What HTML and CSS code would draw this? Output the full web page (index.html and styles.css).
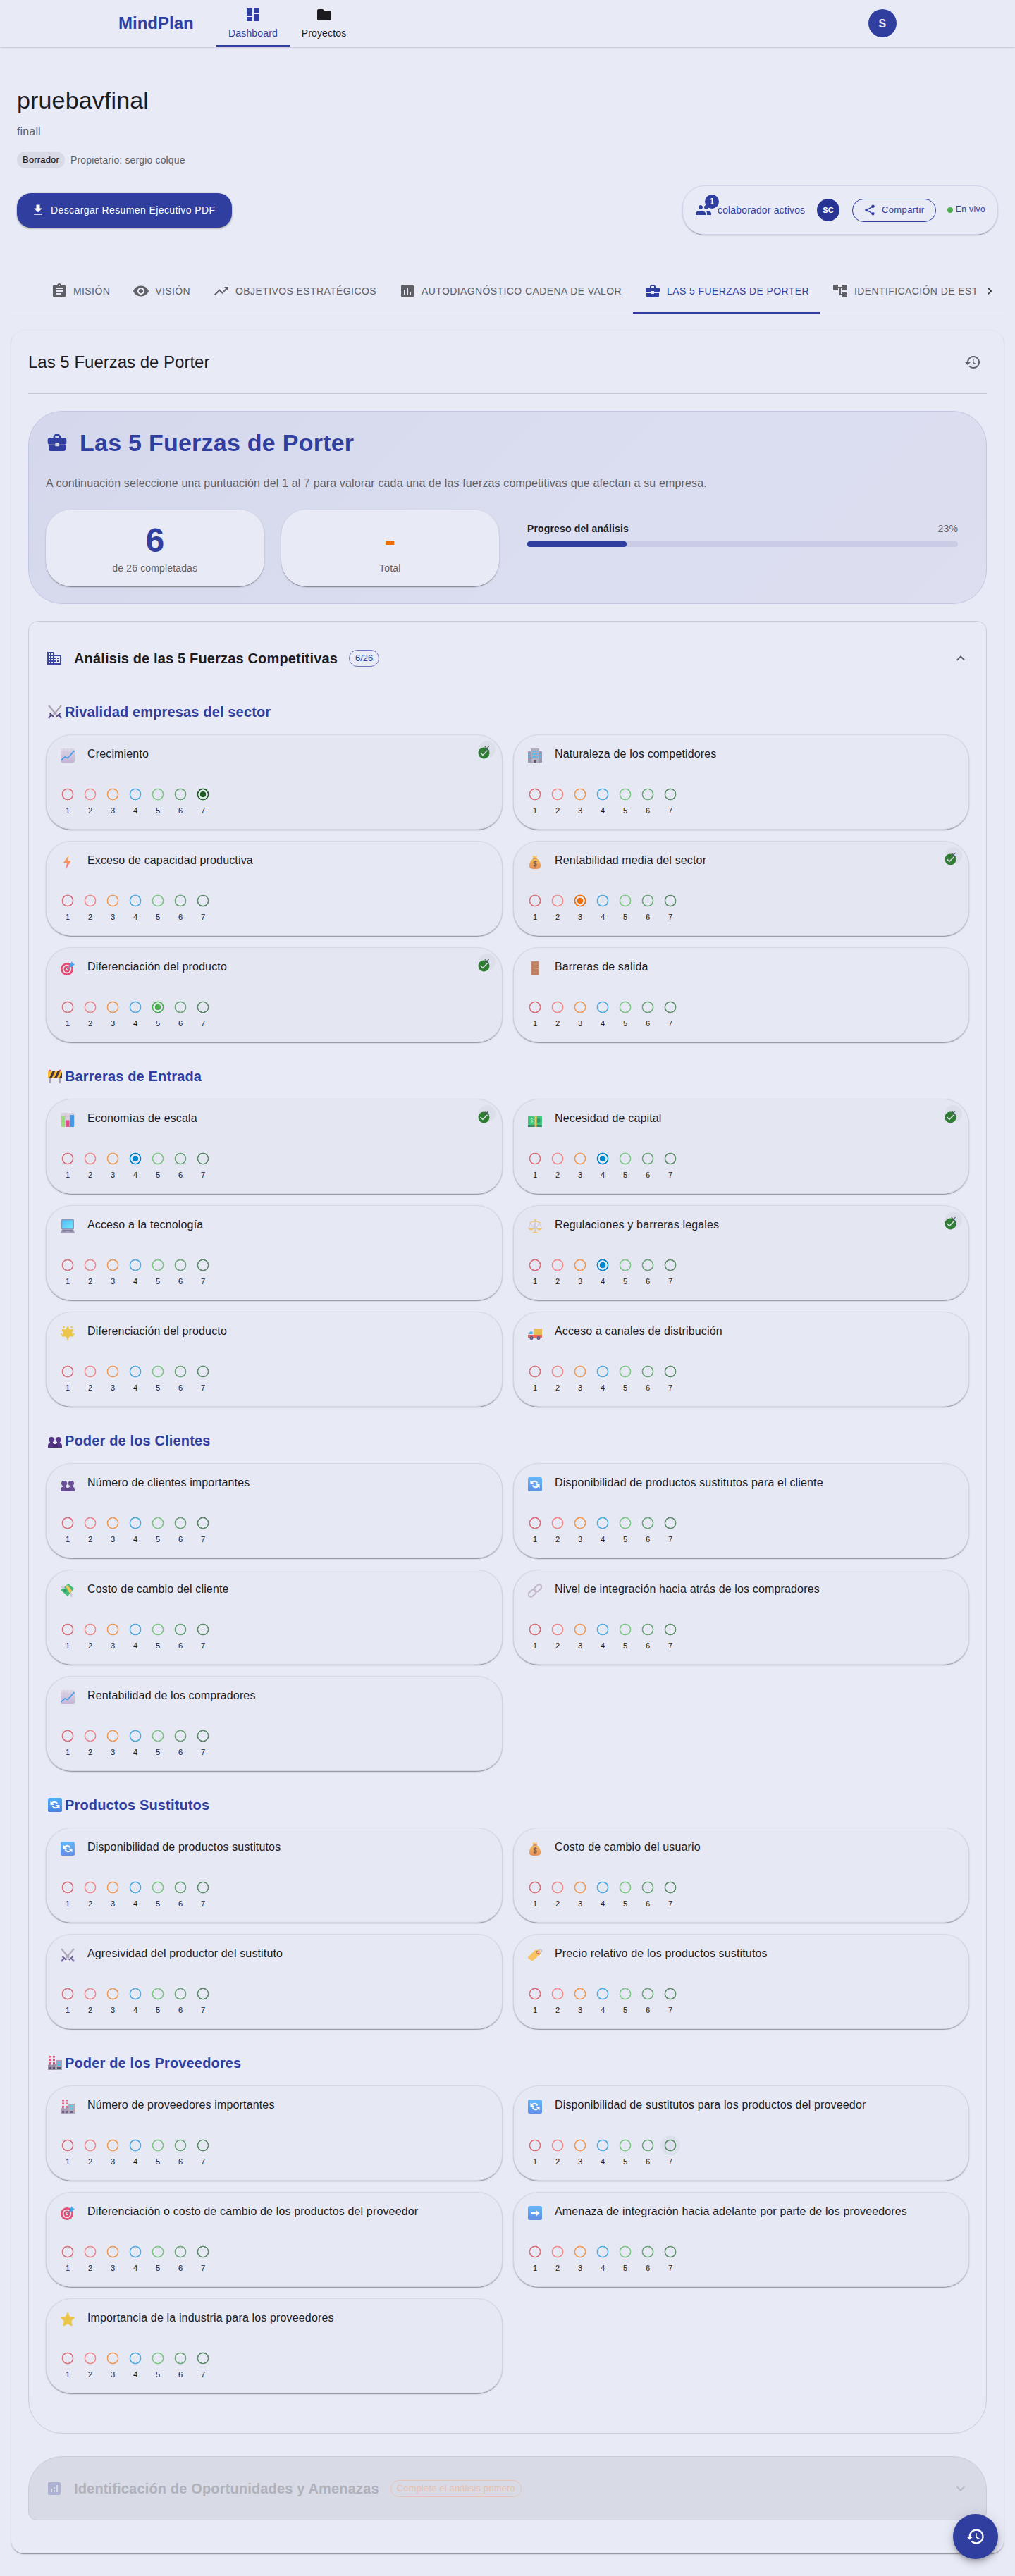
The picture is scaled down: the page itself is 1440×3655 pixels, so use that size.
FILE: index.html
```html
<!DOCTYPE html>
<html lang="es">
<head>
<meta charset="utf-8">
<title>MindPlan - Las 5 Fuerzas de Porter</title>
<link rel="stylesheet" href="styles.css">
</head>
<body>
<svg class="defs" aria-hidden="true">
  <defs>
    <linearGradient id="g-blue" x1="0" y1="0" x2="0" y2="1"><stop offset="0" stop-color="#4fb0fb"/><stop offset="1" stop-color="#4c7fe4"/></linearGradient>
    <linearGradient id="g-bag" x1="0" y1="0" x2="0" y2="1"><stop offset="0" stop-color="#fbc64a"/><stop offset="1" stop-color="#e5803c"/></linearGradient>
    <linearGradient id="g-bolt" x1="0" y1="0" x2="0" y2="1"><stop offset="0" stop-color="#ffb62e"/><stop offset="1" stop-color="#f4506a"/></linearGradient>
    <linearGradient id="g-paper" x1="0" y1="0" x2="0" y2="1"><stop offset="0" stop-color="#e0d9e6"/><stop offset="1" stop-color="#c0a9d2"/></linearGradient>
    <linearGradient id="g-screen" x1="0" y1="0" x2="1" y2="1"><stop offset="0" stop-color="#37b4f5"/><stop offset="1" stop-color="#5fe8fb"/></linearGradient>
  </defs>
  <symbol id="i-dashboard" viewBox="0 0 24 24"><path d="M3 13h8V3H3v10zm0 8h8v-6H3v6zm10 0h8V11h-8v10zm0-18v6h8V3h-8z"/></symbol>
  <symbol id="i-folder" viewBox="0 0 24 24"><path d="M10 4H4c-1.100 0-1.990.9-1.990 2L2 18c0 1.100.9 2 2 2h16c1.100 0 2-.9 2-2V8c0-1.100-.9-2-2-2h-8l-2-2z"/></symbol>
  <symbol id="i-download" viewBox="0 0 24 24"><path d="M5 20h14v-2H5v2zM19 9h-4V3H9v6H5l7 7 7-7z"/></symbol>
  <symbol id="i-group" viewBox="0 0 24 24"><path d="M16 11c1.660 0 2.990-1.340 2.990-3S17.660 5 16 5c-1.660 0-3 1.340-3 3s1.340 3 3 3zm-8 0c1.660 0 2.990-1.340 2.990-3S9.660 5 8 5C6.340 5 5 6.340 5 8s1.340 3 3 3zm0 2c-2.330 0-7 1.170-7 3.500V19h14v-2.500c0-2.330-4.670-3.500-7-3.500zm8 0c-.29 0-.62.02-.97.05 1.160.84 1.970 1.970 1.970 3.450V19h6v-2.500c0-2.330-4.670-3.500-7-3.500z"/></symbol>
  <symbol id="i-share" viewBox="0 0 24 24"><path d="M18 16.080c-.76 0-1.440.3-1.960.77L8.910 12.700c.05-.23.09-.46.09-.7s-.04-.47-.09-.7l7.050-4.110c.54.5 1.250.81 2.040.81 1.660 0 3-1.340 3-3s-1.340-3-3-3-3 1.340-3 3c0 .24.04.47.09.7L8.040 9.810C7.500 9.310 6.790 9 6 9c-1.660 0-3 1.340-3 3s1.340 3 3 3c.79 0 1.500-.31 2.040-.81l7.120 4.160c-.05.21-.08.43-.08.65 0 1.610 1.310 2.920 2.920 2.920s2.920-1.310 2.920-2.920-1.310-2.920-2.920-2.920z"/></symbol>
  <symbol id="i-assignment" viewBox="0 0 24 24"><path d="M19 3h-4.180C14.400 1.840 13.300 1 12 1c-1.300 0-2.400.84-2.820 2H5c-1.100 0-2 .9-2 2v14c0 1.100.9 2 2 2h14c1.100 0 2-.9 2-2V5c0-1.100-.9-2-2-2zm-7 0c.55 0 1 .45 1 1s-.45 1-1 1-1-.45-1-1 .45-1 1-1zm2 14H7v-2h7v2zm3-4H7v-2h10v2zm0-4H7V7h10v2z"/></symbol>
  <symbol id="i-eye" viewBox="0 0 24 24"><path d="M12 4.500C7 4.500 2.730 7.610 1 12c1.730 4.390 6 7.500 11 7.500s9.270-3.110 11-7.500c-1.730-4.390-6-7.500-11-7.500zM12 17c-2.760 0-5-2.240-5-5s2.240-5 5-5 5 2.240 5 5-2.240 5-5 5zm0-8c-1.660 0-3 1.340-3 3s1.340 3 3 3 3-1.340 3-3-1.340-3-3-3z"/></symbol>
  <symbol id="i-trend" viewBox="0 0 24 24"><path d="m16 6 2.290 2.290-4.880 4.880-4-4L2 16.590 3.410 18l6-6 4 4 6.300-6.290L22 12V6z"/></symbol>
  <symbol id="i-chart" viewBox="0 0 24 24"><path d="M19 3H5c-1.100 0-2 .9-2 2v14c0 1.100.9 2 2 2h14c1.100 0 2-.9 2-2V5c0-1.100-.9-2-2-2zM9 17H7v-7h2v7zm4 0h-2V7h2v10zm4 0h-2v-4h2v4z"/></symbol>
  <symbol id="i-analytics" viewBox="0 0 24 24"><path d="M19 3H5c-1.100 0-2 .9-2 2v14c0 1.100.9 2 2 2h14c1.100 0 2-.9 2-2V5c0-1.100-.9-2-2-2zM9 17H7v-5h2v5zm4 0h-2v-3h2v3zm0-5h-2v-2h2v2zm4 5h-2V7h2v10z"/></symbol>
  <symbol id="i-case" viewBox="0 0 24 24"><path d="M10 16v-1H3.010L3 19c0 1.110.89 2 2 2h14c1.110 0 2-.89 2-2v-4h-7v1h-4zm10-9h-4.010V5l-2-2h-4l-2 2v2H4c-1.100 0-2 .9-2 2v3c0 1.110.89 2 2 2h6v-2h4v2h6c1.100 0 2-.9 2-2V9c0-1.100-.9-2-2-2zm-6 0h-4V5h4v2z"/></symbol>
  <symbol id="i-tree" viewBox="0 0 24 24"><path d="M22 11V3h-7v3H9V3H2v8h7V8h2v10h4v3h7v-8h-7v3h-2V8h2v3z"/></symbol>
  <symbol id="i-right" viewBox="0 0 24 24"><path d="M10 6 8.590 7.410 13.170 12l-4.580 4.590L10 18l6-6z"/></symbol>
  <symbol id="i-up" viewBox="0 0 24 24"><path d="m12 8-6 6 1.410 1.410L12 10.830l4.590 4.580L18 14z"/></symbol>
  <symbol id="i-history" viewBox="0 0 24 24"><path d="M13 3c-4.970 0-9 4.030-9 9H1l3.890 3.890.07.14L9 12H6c0-3.870 3.130-7 7-7s7 3.130 7 7-3.130 7-7 7c-1.930 0-3.680-.79-4.940-2.060l-1.420 1.420C8.270 19.990 10.510 21 13 21c4.970 0 9-4.030 9-9s-4.030-9-9-9zm-1 5v5l4.280 2.540.72-1.210-3.500-2.080V8H12z"/></symbol>
  <symbol id="i-business" viewBox="0 0 24 24"><path d="M12 7V3H2v18h20V7H12zM6 19H4v-2h2v2zm0-4H4v-2h2v2zm0-4H4V9h2v2zm0-4H4V5h2v2zm4 12H8v-2h2v2zm0-4H8v-2h2v2zm0-4H8V9h2v2zm0-4H8V5h2v2zm10 12h-8v-2h2v-2h-2v-2h2v-2h-2V9h8v10zm-2-8h-2v2h2v-2zm0 4h-2v2h2v-2z"/></symbol>
  <symbol id="i-check" viewBox="0 0 24 24"><path d="M12 2C6.480 2 2 6.480 2 12s4.480 10 10 10 10-4.480 10-10S17.520 2 12 2zm-2 15-5-5 1.410-1.410L10 14.170l7.590-7.590L19 8l-9 9z"/></symbol>

  <symbol id="e-swords" viewBox="0 0 20 20"><path d="M1 1l11 13M19 1L8 14" stroke="#a9a2b3" stroke-width="2.200" fill="none"/><path d="M2.500 12l5.500 5M17.500 12l-5.500 5M5 14.500L1.500 18M15 14.500l3.500 3.500" stroke="#5b4a80" stroke-width="2.200" fill="none"/><path d="M2.500 19.500l-2-2M17.500 19.500l2-2" stroke="#8f7bd0" stroke-width="1.800"/></symbol>
  <symbol id="e-growth" viewBox="0 0 20 20"><rect width="20" height="20" rx="2" fill="url(#g-paper)"/><path d="M5 0v20M10 0v20M15 0v20M0 5h20M0 10h20M0 15h20" stroke="#c3b8d0" stroke-width=".6"/><path d="M.5 17L6 12l4 1.500L19.500 3" stroke="#2390ea" stroke-width="1.600" fill="none"/></symbol>
  <symbol id="e-bolt" viewBox="0 0 20 20"><path d="M11.500 0L4 11h5L7.500 20 15 8h-5z" fill="url(#g-bolt)"/></symbol>
  <symbol id="e-target" viewBox="0 0 20 20"><circle cx="9" cy="11" r="9" fill="#e4315e"/><circle cx="9" cy="11" r="6.300" fill="#ecdbe8"/><circle cx="9" cy="11" r="4.500" fill="#e4315e"/><circle cx="9" cy="11" r="2.200" fill="#ecdbe8"/><path d="M9 11l7-7" stroke="#6a6f9a" stroke-width="1.200"/><path d="M13 5l3-5 1 3 3 1-4 4-3 0z" fill="#2898ee"/></symbol>
  <symbol id="e-building" viewBox="0 0 20 20"><path d="M0 5q0-1 1-1h4v16H0zM15 4h4q1 0 1 1v15h-5z" fill="#8f8aa9"/><path d="M4 1q0-1 1-1h10q1 0 1 1v19H4z" fill="#aaa4b8"/><path d="M6 3h2v2H6zm3 0h2v2H9zm3 0h2v2h-2zM6 7h2v2H6zm3 0h2v2H9zm3 0h2v2h-2zM6 11h2v2H6zm3 0h2v2H9zm3 0h2v2h-2zM1 7h2v2H1zm0 4h2v2H1zm16-4h2v2h-2zm0 4h2v2h-2z" fill="#38b6f6"/><path d="M8 16h4v4H8z" fill="#49365a"/></symbol>
  <symbol id="e-bag" viewBox="0 0 20 20"><path d="M6.500 1l3.500 1 3-2-1 5c4 2 6 6 6 10 0 4-2 5-8 5s-8-1-8-5c0-4 2-8 6-10z" fill="url(#g-bag)"/><path d="M7 5h6" stroke="#a05a30" stroke-width="1"/><path d="M12.300 10c-1-1.300-4.300-1-4.300.8 0 2 4.300 1 4.300 3.200 0 1.800-3.500 2-4.500.6M10 8v9.500" stroke="#704432" stroke-width="1.200" fill="none"/></symbol>
  <symbol id="e-door" viewBox="0 0 20 20"><path d="M4.500 0h11v20h-11z" fill="#c37a52"/><path d="M6.500 2h7v4h-7zm0 6h7v4h-7zm0 6h7v4h-7z" fill="none" stroke="#a65d3c" stroke-width=".8"/><circle cx="14" cy="10.500" r=".8" fill="#f0c25e"/></symbol>
  <symbol id="e-barrier" viewBox="0 0 20 20"><path d="M2 1h2v19H2zM16 1h2v19h-2z" fill="#aaa1b2"/><rect y="3" width="20" height="9.500" rx="1" fill="#f9b92e"/><path d="M2 12.500L6.500 3H10L5.500 12.500zM9 12.500L13.500 3H17l-4.500 9.500zM16 12.500L20 4.500v8z" fill="#443345"/><circle cx="3" cy="2" r="1.300" fill="#e84865"/><circle cx="17" cy="2" r="1.300" fill="#e84865"/></symbol>
  <symbol id="e-bars" viewBox="0 0 20 20"><rect width="20" height="20" rx="2" fill="#d8cfdf"/><path d="M7 0v20M13 0v20M0 6h20M0 13h20" stroke="#c0b3cc" stroke-width=".6"/><path d="M1 5h5v15H1z" fill="#8cdc62"/><path d="M7.500 10.500h5V20h-5z" fill="#e83172"/><path d="M14 3h5v17h-5z" fill="#2e8be2"/></symbol>
  <symbol id="e-cash" viewBox="0 0 20 20"><rect y="5" width="20" height="12" rx="1" fill="#27c06a"/><path d="M0 17h20v3H0z" fill="#177a50"/><circle cx="14.500" cy="11" r="3" fill="#159056"/><path d="M7 9c-1-1-3-.5-2.500 1 .4 1 2.500.7 2.500 2 0 1.300-2 1.500-3 .5" stroke="#c4f3cc" stroke-width="1" fill="none"/><path d="M9.500 5h3v15h-3z" fill="#f4b93c"/></symbol>
  <symbol id="e-laptop" viewBox="0 0 20 20"><rect x="1" width="18" height="14" rx="1" fill="#7b8ab8"/><path d="M2.300 1.300h15.400v11.400H2.300z" fill="url(#g-screen)"/><path d="M2 14h16l2 5H0z" fill="#9a94b2"/><path d="M3 15.500h14M2.500 17.200h5M12.500 17.200h5" stroke="#68607f" stroke-width=".8"/><path d="M0 18.800h20V20H0z" fill="#b5adc4"/></symbol>
  <symbol id="e-scale" viewBox="0 0 20 20"><path d="M9.300 1h1.400v17H9.300z" fill="#cfb9d4"/><path d="M2 5q8-4 16 0" stroke="#f5bf68" stroke-width="1.200" fill="none"/><path d="M4 5L1 13h7L4 5M16 5l-4 8h7.500L16 5" stroke="#cbb8cf" stroke-width=".8" fill="none"/><path d="M0 13h8.500q-4 5-8.500 0zM11.500 13H20q-4 5-8.500 0zM5.500 19.500q4.500-4 9 0z" fill="#f8bd55"/><circle cx="10" cy="1.500" r="1.300" fill="#f8bd55"/></symbol>
  <symbol id="e-glow" viewBox="0 0 20 20"><path d="M10 1.500l2.400 4.700 5.400-.6-2.600 4.600 2.600 4.600-5.200-.4L10 18l-2.600-3.600-5.200.4 2.600-4.600-2.600-4.600 5.400.6z" fill="#ecc02d" stroke="#ecc02d" stroke-width="1.500" stroke-linejoin="round"/><g fill="#f0b93c"><circle cx="4.500" cy="2" r="1.200"/><circle cx="15.500" cy="2" r="1.200"/><circle cx="1.200" cy="12.300" r="1.100"/><circle cx="18.800" cy="12.300" r="1.100"/><circle cx="10" cy="19" r="1.200"/></g></symbol>
  <symbol id="e-truck" viewBox="0 0 20 20"><path d="M8.500 4H19q1 0 1 1v9H8.500z" fill="#e8b536"/><path d="M2 7h6v8H0v-4z" fill="#dfd7e2"/><path d="M3 8.500h3.500V12H1.500z" fill="#2db4ee"/><path d="M0 13h20v4H0z" fill="#ee5141"/><circle cx="5" cy="17.500" r="2.500" fill="#4a3d63"/><circle cx="15" cy="17.500" r="2.500" fill="#4a3d63"/><circle cx="5" cy="17.500" r="1" fill="#b9b0c8"/><circle cx="15" cy="17.500" r="1" fill="#b9b0c8"/></symbol>
  <symbol id="e-people" viewBox="0 0 20 20"><path d="M0 20v-3q0-3 3-3.500V12Q1 11 1 8.500 1 5 5 5t4.300 3.500Q9.300 11 7 12v1.500q2.500.5 2.600 3.500v3zM10.400 20v-3q.1-3 2.600-3.500V12q-2.300-1-2.300-3.500Q11 5 15 5t4 3.500Q19 11 17 12v1.500q3 .5 3 3.500v3z" fill="#553684"/><path d="M6 15h8v5H6z" fill="#4a2d78"/></symbol>
  <symbol id="e-sync" viewBox="0 0 20 20"><rect width="20" height="20" rx="2.500" fill="url(#g-blue)"/><path d="M5 10V6.500M5 7.500q5.500-4 8.500 1M15 10v3.500M15 12.500q-5.500 4-8.500-1" stroke="#fff" stroke-width="2" fill="none"/><path d="M3.500 4.500v5.500H9zM16.500 15.500V10H11z" fill="#fff"/></symbol>
  <symbol id="e-wing" viewBox="0 0 20 20"><path d="M0 9L11 0l8 7-9 11z" fill="#27b765"/><path d="M7 4l3-2 6 8-3 4z" fill="#f3bd3e"/><path d="M0 4q5 0 7 3-5 1-7-3zM14 13q4 0 2 7-3-2-2-7z" fill="#c8c0d1"/><circle cx="6" cy="10" r="2" fill="#14854f"/></symbol>
  <symbol id="e-link" viewBox="0 0 20 20"><g fill="none" stroke="#bdb1c6" stroke-width="2.200"><rect x="0" y="10" width="12" height="7" rx="3.500" transform="rotate(-42 6 13.500)"/><rect x="8" y="3" width="12" height="7" rx="3.500" transform="rotate(-42 14 6.500)"/></g></symbol>
  <symbol id="e-tag" viewBox="0 0 20 20"><path d="M0 13L10 3l7-.5 1 6L7 18q-1 .8-2 0L0 14.500z" fill="#fbbd4a"/><circle cx="14" cy="6" r="2.200" fill="#e4573d"/><circle cx="14" cy="6" r="1" fill="#efe6ea"/><path d="M14 6q1-6 5-4 2 4-3 6" stroke="#b8b0c0" stroke-width="1" fill="none"/></symbol>
  <symbol id="e-factory" viewBox="0 0 20 20"><path d="M2 0h3v12H2zM7 0h3v12H7z" fill="#e2507b"/><path d="M2 2.500h3v2H2zm5 0h3v2H7zM2 7h3v2H2zm5 0h3v2H7z" fill="#e8dfe8"/><path d="M0 13l5-2.500V13l6-2.500V20H0z" fill="#9b8fa8"/><path d="M11 6h9v14h-9z" fill="#a9a1b7"/><path d="M13 8h2v2h-2zm3 0h2v2h-2zm-3 4h2v2h-2zm3 0h2v2h-2z" fill="#3fc2f4"/><path d="M2 16h3v3H2zm5 0h3v3H7zm6 0h5v3h-5z" fill="#5d4b70"/></symbol>
  <symbol id="e-arrow" viewBox="0 0 20 20"><rect width="20" height="20" rx="2.500" fill="url(#g-blue)"/><path d="M4 9h7V5.500l5.500 4.700L11 15v-3.500H4z" fill="#fff"/></symbol>
  <symbol id="e-star" viewBox="0 0 20 20"><path d="M10 1.200l2.700 5.700 6.300.8-4.600 4.300 1.300 6.500L10 15.500l-5.700 3 1.300-6.500L1 7.700l6.300-.8z" fill="#ecc02d" stroke="#ecc02d" stroke-width="1.600" stroke-linejoin="round"/></symbol>
</svg>

<header class="topbar">
  <div class="brand">MindPlan</div>
  <nav class="nav">
    <a class="nav-item active"><svg><use href="#i-dashboard"/></svg><span>Dashboard</span></a>
    <a class="nav-item"><svg><use href="#i-folder"/></svg><span>Proyectos</span></a>
  </nav>
  <div class="avatar">S</div>
</header>

<section class="project">
  <h1>pruebavfinal</h1>
  <p class="desc">finall</p>
  <div class="meta"><span class="state">Borrador</span><span>Propietario: sergio colque</span></div>
  <div class="actions">
    <button class="download"><svg><use href="#i-download"/></svg>Descargar Resumen Ejecutivo PDF</button>
    <div class="collab">
      <span class="people"><svg><use href="#i-group"/></svg><b class="badge">1</b></span>
      <span class="collab-text">colaborador activos</span>
      <span class="mini-avatar">SC</span>
      <button class="share"><svg><use href="#i-share"/></svg>Compartir</button>
      <span class="live"><i></i>En vivo</span>
    </div>
  </div>
</section>

<nav class="tabs">
  <div class="tab-strip">
    <a class="tab"><svg><use href="#i-assignment"/></svg>MISIÓN</a>
    <a class="tab"><svg><use href="#i-eye"/></svg>VISIÓN</a>
    <a class="tab"><svg><use href="#i-trend"/></svg>OBJETIVOS ESTRATÉGICOS</a>
    <a class="tab"><svg><use href="#i-chart"/></svg>AUTODIAGNÓSTICO CADENA DE VALOR</a>
    <a class="tab active"><svg><use href="#i-case"/></svg>LAS 5 FUERZAS DE PORTER</a>
    <a class="tab"><svg><use href="#i-tree"/></svg>IDENTIFICACIÓN DE ESTRATEGIAS</a>
  </div>
  <span class="tab-next"><svg><use href="#i-right"/></svg></span>
</nav>

<main class="panel">
  <div class="panel-head"><h2>Las 5 Fuerzas de Porter</h2><svg><use href="#i-history"/></svg></div>

  <section class="hero">
    <h3><svg><use href="#i-case"/></svg>Las 5 Fuerzas de Porter</h3>
    <p>A continuación seleccione una puntuación del 1 al 7 para valorar cada una de las fuerzas competitivas que afectan a su empresa.</p>
    <div class="stats">
      <div class="stat"><strong>6</strong><span>de 26 completadas</span></div>
      <div class="stat total"><strong>-</strong><span>Total</span></div>
      <div class="progress">
        <div class="progress-label"><b>Progreso del análisis</b><span>23%</span></div>
        <div class="bar"><div style="width:23.080%"></div></div>
      </div>
    </div>
  </section>

  <section class="accordion">
    <div class="acc-head"><svg class="acc-icon"><use href="#i-business"/></svg><h4>Análisis de las 5 Fuerzas Competitivas</h4><span class="count">6/26</span><svg class="chev"><use href="#i-up"/></svg></div>

    <section class="force">
      <h5><svg><use href="#e-swords"/></svg>Rivalidad empresas del sector</h5>
      <div class="cards">
        <article class="card done"><svg class="emo"><use href="#e-growth"/></svg><p>Crecimiento</p><ol><li>1<li>2<li>3<li>4<li>5<li>6<li class="on">7</ol><span class="mark"><svg><use href="#i-check"/></svg><i>✕</i></span></article>
        <article class="card"><svg class="emo"><use href="#e-building"/></svg><p>Naturaleza de los competidores</p><ol><li>1<li>2<li>3<li>4<li>5<li>6<li>7</ol></article>
        <article class="card"><svg class="emo"><use href="#e-bolt"/></svg><p>Exceso de capacidad productiva</p><ol><li>1<li>2<li>3<li>4<li>5<li>6<li>7</ol></article>
        <article class="card done"><svg class="emo"><use href="#e-bag"/></svg><p>Rentabilidad media del sector</p><ol><li>1<li>2<li class="on">3<li>4<li>5<li>6<li>7</ol><span class="mark"><svg><use href="#i-check"/></svg><i>✕</i></span></article>
        <article class="card done"><svg class="emo"><use href="#e-target"/></svg><p>Diferenciación del producto</p><ol><li>1<li>2<li>3<li>4<li class="on">5<li>6<li>7</ol><span class="mark"><svg><use href="#i-check"/></svg><i>✕</i></span></article>
        <article class="card"><svg class="emo"><use href="#e-door"/></svg><p>Barreras de salida</p><ol><li>1<li>2<li>3<li>4<li>5<li>6<li>7</ol></article>
      </div>
    </section>

    <section class="force">
      <h5><svg><use href="#e-barrier"/></svg>Barreras de Entrada</h5>
      <div class="cards">
        <article class="card done"><svg class="emo"><use href="#e-bars"/></svg><p>Economías de escala</p><ol><li>1<li>2<li>3<li class="on">4<li>5<li>6<li>7</ol><span class="mark"><svg><use href="#i-check"/></svg><i>✕</i></span></article>
        <article class="card done"><svg class="emo"><use href="#e-cash"/></svg><p>Necesidad de capital</p><ol><li>1<li>2<li>3<li class="on">4<li>5<li>6<li>7</ol><span class="mark"><svg><use href="#i-check"/></svg><i>✕</i></span></article>
        <article class="card"><svg class="emo"><use href="#e-laptop"/></svg><p>Acceso a la tecnología</p><ol><li>1<li>2<li>3<li>4<li>5<li>6<li>7</ol></article>
        <article class="card done"><svg class="emo"><use href="#e-scale"/></svg><p>Regulaciones y barreras legales</p><ol><li>1<li>2<li>3<li class="on">4<li>5<li>6<li>7</ol><span class="mark"><svg><use href="#i-check"/></svg><i>✕</i></span></article>
        <article class="card"><svg class="emo"><use href="#e-glow"/></svg><p>Diferenciación del producto</p><ol><li>1<li>2<li>3<li>4<li>5<li>6<li>7</ol></article>
        <article class="card"><svg class="emo"><use href="#e-truck"/></svg><p>Acceso a canales de distribución</p><ol><li>1<li>2<li>3<li>4<li>5<li>6<li>7</ol></article>
      </div>
    </section>

    <section class="force">
      <h5><svg><use href="#e-people"/></svg>Poder de los Clientes</h5>
      <div class="cards">
        <article class="card"><svg class="emo"><use href="#e-people"/></svg><p>Número de clientes importantes</p><ol><li>1<li>2<li>3<li>4<li>5<li>6<li>7</ol></article>
        <article class="card"><svg class="emo"><use href="#e-sync"/></svg><p>Disponibilidad de productos sustitutos para el cliente</p><ol><li>1<li>2<li>3<li>4<li>5<li>6<li>7</ol></article>
        <article class="card"><svg class="emo"><use href="#e-wing"/></svg><p>Costo de cambio del cliente</p><ol><li>1<li>2<li>3<li>4<li>5<li>6<li>7</ol></article>
        <article class="card"><svg class="emo"><use href="#e-link"/></svg><p>Nivel de integración hacia atrás de los compradores</p><ol><li>1<li>2<li>3<li>4<li>5<li>6<li>7</ol></article>
        <article class="card"><svg class="emo"><use href="#e-growth"/></svg><p>Rentabilidad de los compradores</p><ol><li>1<li>2<li>3<li>4<li>5<li>6<li>7</ol></article>
      </div>
    </section>

    <section class="force">
      <h5><svg><use href="#e-sync"/></svg>Productos Sustitutos</h5>
      <div class="cards">
        <article class="card"><svg class="emo"><use href="#e-sync"/></svg><p>Disponibilidad de productos sustitutos</p><ol><li>1<li>2<li>3<li>4<li>5<li>6<li>7</ol></article>
        <article class="card"><svg class="emo"><use href="#e-bag"/></svg><p>Costo de cambio del usuario</p><ol><li>1<li>2<li>3<li>4<li>5<li>6<li>7</ol></article>
        <article class="card"><svg class="emo"><use href="#e-swords"/></svg><p>Agresividad del productor del sustituto</p><ol><li>1<li>2<li>3<li>4<li>5<li>6<li>7</ol></article>
        <article class="card"><svg class="emo"><use href="#e-tag"/></svg><p>Precio relativo de los productos sustitutos</p><ol><li>1<li>2<li>3<li>4<li>5<li>6<li>7</ol></article>
      </div>
    </section>

    <section class="force">
      <h5><svg><use href="#e-factory"/></svg>Poder de los Proveedores</h5>
      <div class="cards">
        <article class="card"><svg class="emo"><use href="#e-factory"/></svg><p>Número de proveedores importantes</p><ol><li>1<li>2<li>3<li>4<li>5<li>6<li>7</ol></article>
        <article class="card"><svg class="emo"><use href="#e-sync"/></svg><p>Disponibilidad de sustitutos para los productos del proveedor</p><ol><li>1<li>2<li>3<li>4<li>5<li>6<li class="hover">7</ol></article>
        <article class="card"><svg class="emo"><use href="#e-target"/></svg><p>Diferenciación o costo de cambio de los productos del proveedor</p><ol><li>1<li>2<li>3<li>4<li>5<li>6<li>7</ol></article>
        <article class="card"><svg class="emo"><use href="#e-arrow"/></svg><p>Amenaza de integración hacia adelante por parte de los proveedores</p><ol><li>1<li>2<li>3<li>4<li>5<li>6<li>7</ol></article>
        <article class="card"><svg class="emo"><use href="#e-star"/></svg><p>Importancia de la industria para los proveedores</p><ol><li>1<li>2<li>3<li>4<li>5<li>6<li>7</ol></article>
      </div>
    </section>
  </section>

  <section class="accordion locked">
    <div class="acc-head"><svg class="acc-icon"><use href="#i-analytics"/></svg><h4>Identificación de Oportunidades y Amenazas</h4><span class="count">Complete el análisis primero</span><svg class="chev down"><use href="#i-up"/></svg></div>
  </section>
</main>
<button class="fab"><svg><use href="#i-history"/></svg></button>
</body>
</html>
```
FILE: styles.css
```css
* { box-sizing: border-box; margin: 0; padding: 0; }
:root { --primary: #303f9f; --text: #1c1b1f; --muted: #5f5f66; --bg: #e8eaf6; }
body { width: 1440px; height: 3655px; position: relative; background: var(--bg); color: var(--text); font: 14px/20px "Liberation Sans", Arial, sans-serif; letter-spacing: .15px; }
svg { fill: currentColor; display: block; flex: none; width: 24px; height: 24px; }
.defs { position: absolute; width: 0; height: 0; }
button { font: inherit; border: 0; background: none; color: inherit; display: flex; align-items: center; }

.topbar { height: 66px; padding: 0 168px; display: flex; align-items: center; box-shadow: 0 1px 1px rgba(0,0,0,.3), 0 1px 3px rgba(0,0,0,.18); }
.brand { width: 139px; font-size: 24px; font-weight: 700; line-height: 28px; color: var(--primary); letter-spacing: 0; }
.nav { display: flex; height: 66px; }
.nav-item { width: 104px; padding-top: 9px; display: flex; flex-direction: column; align-items: center; gap: 5px; line-height: 19px; border-bottom: 2px solid transparent; }
.nav-item + .nav-item { width: 97px; }
.nav-item.active { color: var(--primary); border-color: var(--primary); }
.avatar { margin-left: auto; width: 40px; height: 40px; border-radius: 50%; background: var(--primary); color: var(--bg); display: grid; place-items: center; font-size: 16px; font-weight: 700; line-height: 1; padding-top: 2px; }

.project { padding: 53px 24px 0; height: 313px; }
h1 { font-size: 34px; line-height: 42px; font-weight: 400; letter-spacing: .15px; margin-top: 2px; }
.desc { font-size: 16px; line-height: 24px; color: var(--muted); margin-top: 12px; }
.meta { display: flex; align-items: center; gap: 8px; height: 24px; margin-top: 16px; color: var(--muted); }
.state { height: 24px; width: 68px; text-align: center; border-radius: 12px; background: #d8dae5; color: var(--text); font-size: 13px; line-height: 24px; -webkit-text-stroke: .2px currentColor; }
.actions { display: flex; justify-content: space-between; align-items: center; margin: 24px 0 0; height: 70px; }
.download { height: 49px; padding: 0 24px 0 20px; border-radius: 20px; background: var(--primary); color: #fff; gap: 8px; letter-spacing: .4px; box-shadow: 0 1px 3px rgba(0,0,0,.4); white-space: nowrap; }
.download svg { width: 20px; height: 20px; }
.collab { width: 448px; height: 70px; padding: 0 17px; border: 1px solid #cfd3ea; border-radius: 32px; display: flex; align-items: center; color: var(--primary); box-shadow: 0 2px 1px -1px rgba(0,0,0,.2), 0 1px 1px rgba(0,0,0,.12), 0 1px 3px rgba(0,0,0,.1); white-space: nowrap; }
.people { position: relative; }
.badge { position: absolute; left: 14px; top: -10px; width: 20px; height: 20px; border-radius: 50%; background: var(--primary); color: #fff; font-size: 12px; line-height: 20px; text-align: center; letter-spacing: 0; }
.collab-text { margin-left: 8px; width: 124px; }
.mini-avatar { margin-left: 17px; width: 32px; height: 32px; border-radius: 50%; background: #283593; color: #fff; text-align: center; font-size: 11px; font-weight: 700; line-height: 33px; letter-spacing: 0; }
.share { margin-left: 18px; width: 119px; height: 33px; border: 1px solid var(--primary); border-radius: 16px; padding-left: 15px; gap: 8px; font-size: 13px; letter-spacing: .37px; }
.share svg { width: 18px; height: 18px; }
.live { margin-left: 16px; display: flex; align-items: center; gap: 4px; font-size: 12px; line-height: 16px; letter-spacing: .4px; padding-bottom: 2px; }
.live i { width: 8px; height: 8px; border-radius: 50%; background: #4caf50; margin-top: 2px; }

.tabs { margin: 0 16px; height: 67px; display: flex; border-bottom: 1px solid #c8cad8; color: var(--muted); }
.tab-strip { margin-left: 40px; width: 1328px; overflow: hidden; display: flex; }
.tab { flex: none; padding: 4px 16px 0; display: flex; align-items: center; gap: 8px; letter-spacing: .4px; white-space: nowrap; border-bottom: 2px solid transparent; height: 66px; }
.tab.active { color: var(--primary); border-color: var(--primary); }
.tab-next { width: 40px; padding-top: 2px; display: grid; place-items: center; }
.tab-next svg { width: 20px; height: 20px; color: #36353a; }

.panel { margin: 23px 16px 0; height: 3154px; padding: 0 24px; border-radius: 18px; box-shadow: 0 2px 1px -1px rgba(0,0,0,.2), 0 1px 1px rgba(0,0,0,.14), 0 1px 3px rgba(0,0,0,.12); }
.panel-head { height: 90px; display: flex; align-items: center; justify-content: space-between; border-bottom: 1px solid #c8cad8; padding-right: 8px; color: var(--muted); }
.panel-head h2 { font-size: 24px; line-height: 32px; font-weight: 400; letter-spacing: 0; color: var(--text); }

.hero { margin-top: 24px; height: 274px; padding: 24px; border: 1px solid #c0c6e4; border-radius: 48px; background: linear-gradient(135deg, #d5d8ec, #dadef0 60%, #dddef0); }
.hero h3 { display: flex; align-items: center; gap: 16px; height: 42px; margin-top: -1px; font-size: 34px; line-height: 42px; letter-spacing: .25px; color: var(--primary); }
.hero h3 svg { width: 32px; height: 32px; }
.hero p { margin-top: 25px; font-size: 16px; line-height: 24px; color: var(--muted); }
.stats { margin-top: 25px; display: grid; grid-template-columns: 1fr 1fr 643px; gap: 24px; }
.stat { height: 109px; border-radius: 36px; background: var(--bg); text-align: center; color: var(--muted); padding-top: 16px; box-shadow: 0 2px 1px -1px rgba(0,0,0,.2), 0 1px 1px rgba(0,0,0,.16), 0 1px 3px rgba(0,0,0,.14); }
.stat strong { display: block; font-size: 48px; line-height: 56px; letter-spacing: 0; color: var(--primary); }
.stat span { display: block; margin-top: 1px; }
.total strong { color: #ef6c00; }
.progress { padding: 17px 16px; }
.progress-label { display: flex; justify-content: space-between; line-height: 20px; }
.progress-label span { color: var(--muted); }
.bar { margin-top: 8px; height: 8px; border-radius: 4px; background: #cacce6; }
.bar div { height: 8px; border-radius: 4px; background: var(--primary); }

.accordion { margin-top: 24px; height: 2572px; padding: 0 24px; border: 1px solid #cbcddb; border-radius: 14px 14px 48px 48px; }
.acc-head { height: 105px; padding-bottom: 2px; display: flex; align-items: center; }
.acc-icon { color: var(--primary); opacity: .95; }
.acc-head h4 { margin-left: 16px; font-size: 20px; line-height: 32px; letter-spacing: .16px; }
.count { margin-left: 16px; height: 24px; padding: 0 8px; border: 1px solid #6a75bb; border-radius: 12px; font-size: 13px; line-height: 22px; letter-spacing: 0; color: var(--primary); }
.chev { margin-left: auto; color: var(--muted); }
.down { transform: rotate(180deg); }
.locked { margin-top: 32px; height: 91px; border-color: #c9cbd8; border-radius: 48px 48px 12px 12px; background: #d8dae5; }
.locked .acc-head { height: 89px; padding-bottom: 0; }
.locked .acc-icon, .locked .chev { opacity: .25; }
.locked h4 { color: #afb1bb; }
.locked .count { border-color: #e6c4b8; color: #e6c0b0; letter-spacing: .15px; }

.force { padding-bottom: 25px; }
.force h5 { height: 39px; margin-bottom: 16px; padding: 7px 0 0 3px; display: flex; align-items: center; gap: 4px; font-size: 20px; line-height: 32px; letter-spacing: .15px; color: var(--primary); }
.force h5 svg { width: 20px; height: 20px; }
.cards { display: grid; grid-template-columns: 648px 647px; gap: 16px 15px; }
.card { position: relative; height: 135px; padding: 15px 20px 0; border: 1px solid #d2d4e0; border-top-color: #d6d8e3; border-radius: 36px; background: #e6e8f4; display: grid; grid-template: 53px 1fr / 20px 1fr; column-gap: 18px; box-shadow: 0 2px 1px -1px rgba(0,0,0,.2), 0 1px 1px rgba(0,0,0,.14), 0 1px 3px rgba(0,0,0,.1); }
.card.done { background: #e4e6f2; }
.emo { width: 20px; height: 20px; margin-top: 4px; opacity: .85; }
.card p { font-size: 16px; line-height: 24px; }
.card ol { grid-column: 1 / -1; list-style: none; display: flex; margin-left: -6px; }
.card li { width: 32px; padding-top: 7px; text-align: center; font-size: 11.200px; line-height: 18px; letter-spacing: 0; }
.card li::before { content: ""; display: block; width: 18px; height: 18px; margin: 0 auto 5px; border-radius: 50%; background: radial-gradient(circle, transparent 6.400px, var(--c) 7px, var(--c) 8.100px, transparent 8.700px); }
.card li:nth-child(1) { --c: #d9727a; }
.card li:nth-child(2) { --c: #ee8b8c; }
.card li:nth-child(3) { --c: #ed9b57; }
.card li:nth-child(4) { --c: #52abe0; }
.card li:nth-child(5) { --c: #80c686; }
.card li:nth-child(6) { --c: #6fa57b; }
.card li:nth-child(7) { --c: #608e6c; }
.card li.on:nth-child(3) { --c: #ef6c00; }
.card li.on:nth-child(4) { --c: #0288d1; }
.card li.on:nth-child(5) { --c: #4caf50; }
.card li.on:nth-child(7) { --c: #1b5e20; }
.card li.on::before { background: radial-gradient(circle, var(--c) 3.800px, transparent 4.600px, transparent 6.400px, var(--c) 7px, var(--c) 8.100px, transparent 8.700px); }
.card li.hover::before { box-shadow: 0 0 0 5px #dde0ed; background-color: #dde0ed; }
.mark { position: absolute; right: 9px; top: 8px; width: 24px; height: 24px; border-radius: 50%; background: #dcdee9; }
.mark svg { position: absolute; left: -2px; top: 8px; width: 19px; height: 19px; color: #2e7d32; }
.mark i { position: absolute; inset: 0; text-align: center; font-style: normal; font-size: 11px; line-height: 22px; color: #55545c; }

.fab { position: absolute; left: 1352px; top: 3567px; width: 64px; height: 64px; border-radius: 50%; justify-content: center; background: var(--primary); color: #fff; box-shadow: 0 3px 5px -1px rgba(0,0,0,.2), 0 6px 10px rgba(0,0,0,.14), 0 1px 18px rgba(0,0,0,.12); }
.fab svg { width: 28px; height: 28px; }
```
